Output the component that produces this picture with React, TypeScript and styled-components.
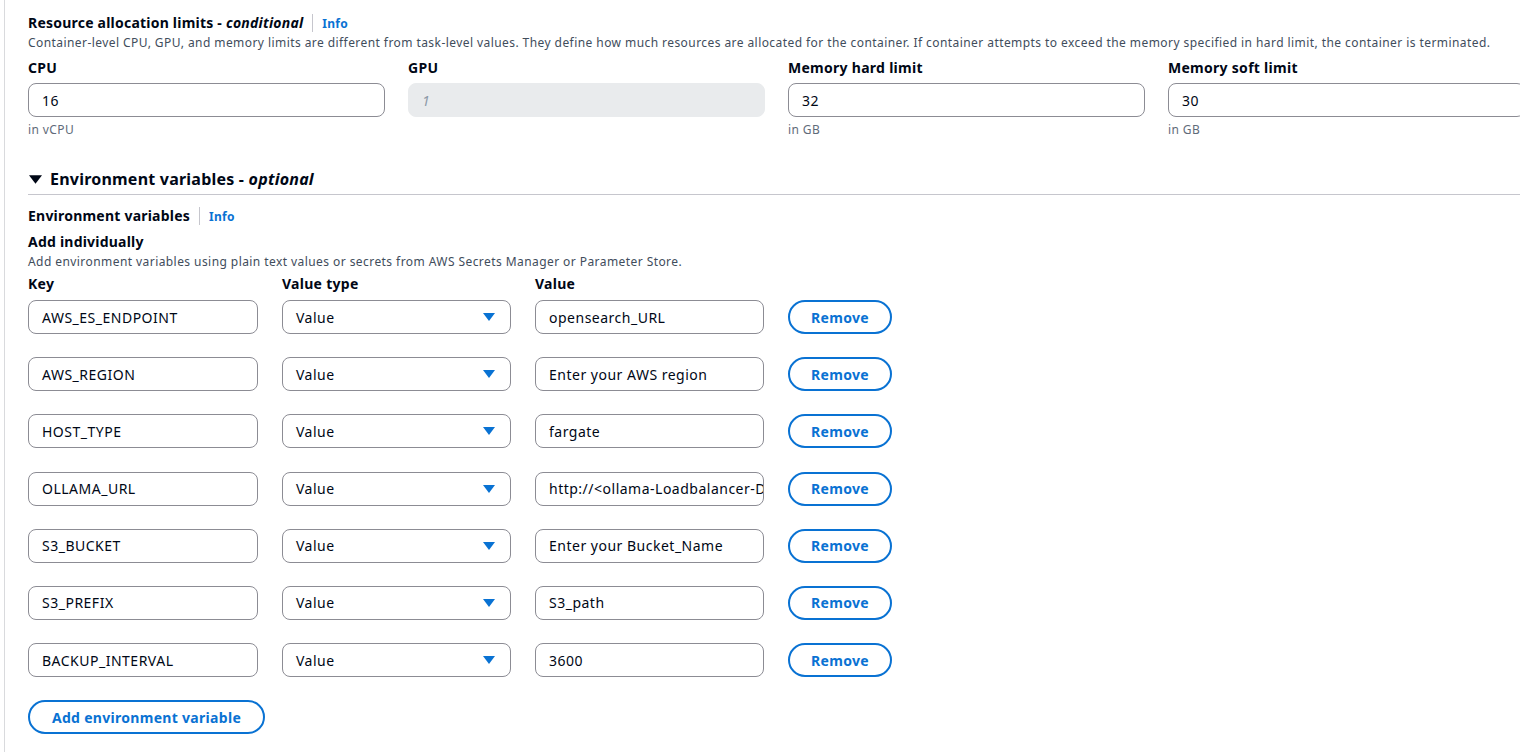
import styled, { createGlobalStyle } from "styled-components";

const GlobalStyle = createGlobalStyle`
  html, body {
    margin: 0;
    padding: 0;
    background: #ffffff;
    overflow: hidden;
  }
  body {
    font-family: "Noto Sans", "Open Sans", Arial, sans-serif;
    color: #000716;
  }
  * {
    box-sizing: border-box;
  }
`;

const envVars = [
  { key: "AWS_ES_ENDPOINT", value: "opensearch_URL" },
  { key: "AWS_REGION", value: "Enter your AWS region" },
  { key: "HOST_TYPE", value: "fargate" },
  { key: "OLLAMA_URL", value: "http://<ollama-Loadbalancer-DNS>" },
  { key: "S3_BUCKET", value: "Enter your Bucket_Name" },
  { key: "S3_PREFIX", value: "S3_path" },
  { key: "BACKUP_INTERVAL", value: "3600" },
];

const limits = [
  { label: "CPU", value: "16", hint: "in vCPU" },
  { label: "GPU", value: "1", disabled: true },
  { label: "Memory hard limit", value: "32", hint: "in GB" },
  { label: "Memory soft limit", value: "30", hint: "in GB" },
];

function CaretDown({ color = "#0972d3", w = 12, h = 8 }) {
  return (
    <svg width={w} height={h} viewBox="0 0 12 8">
      <path d="M0 0 L12 0 L6 8 Z" fill={color} />
    </svg>
  );
}

export default function App() {
  return (
    <>
      <GlobalStyle />
      <Page>
        <TitleRow>
          <Title>
            Resource allocation limits - <em>conditional</em>
          </Title>
          <Divider />
          <InfoLink>Info</InfoLink>
        </TitleRow>
        <Description>
          Container-level CPU, GPU, and memory limits are different from
          task-level values. They define how much resources are allocated for
          the container. If container attempts to exceed the memory specified in
          hard limit, the container is terminated.
        </Description>
        <LimitsGrid>
          {limits.map((item) => (
            <Field key={item.label}>
              <FieldLabel>{item.label}</FieldLabel>
              <TextInput $disabled={item.disabled}>{item.value}</TextInput>
              {item.hint && <Hint>{item.hint}</Hint>}
            </Field>
          ))}
        </LimitsGrid>

        <ExpandHeader>
          <CaretDown color="#000716" w={13} h={9} />
          <ExpandTitle>
            Environment variables - <em>optional</em>
          </ExpandTitle>
        </ExpandHeader>
        <SectionRule />

        <EnvBlock>
          <TitleRow>
            <Title>Environment variables</Title>
            <Divider />
            <InfoLink>Info</InfoLink>
          </TitleRow>
          <SubTitle>Add individually</SubTitle>
          <Description>
            Add environment variables using plain text values or secrets from
            AWS Secrets Manager or Parameter Store.
          </Description>
          <EnvRows>
            <EnvRow>
              <FieldLabel>Key</FieldLabel>
              <FieldLabel>Value type</FieldLabel>
              <FieldLabel>Value</FieldLabel>
            </EnvRow>
            {envVars.map((env) => (
              <EnvRow key={env.key}>
                <TextInput>{env.key}</TextInput>
                <SelectBox>
                  <span>Value</span>
                  <CaretDown />
                </SelectBox>
                <TextInput>{env.value}</TextInput>
                <OutlineButton>Remove</OutlineButton>
              </EnvRow>
            ))}
          </EnvRows>
          <AddButton>Add environment variable</AddButton>
        </EnvBlock>
      </Page>
    </>
  );
}

const Page = styled.div`
  margin-left: 4px;
  min-height: 752px;
  width: 1540px;
  border-left: 1px solid #d9dadd;
  padding: 13px 0 0 23px;
`;

const TitleRow = styled.div`
  display: flex;
  align-items: center;
  height: 20px;
`;

const Title = styled.h2`
  margin: 0;
  font-size: 14px;
  line-height: 20px;
  font-weight: 700;
  letter-spacing: 0.22px;
  em {
    font-style: italic;
  }
`;

const Divider = styled.span`
  width: 1px;
  height: 18px;
  background: #c6c6cd;
  margin: 0 9px;
`;

const InfoLink = styled.a`
  font-size: 12px;
  font-weight: 700;
  letter-spacing: 0.3px;
  color: #0972d3;
  cursor: pointer;
`;

const Description = styled.p`
  margin: 2px 0 0;
  font-size: 12px;
  line-height: 16px;
  letter-spacing: 0.43px;
  color: #414d5c;
  white-space: nowrap;
`;

const LimitsGrid = styled.div`
  display: grid;
  grid-template-columns: repeat(4, 357px);
  column-gap: 23px;
  margin-top: 7px;
`;

const Field = styled.div`
  display: flex;
  flex-direction: column;
`;

const FieldLabel = styled.label`
  font-size: 14px;
  line-height: 20px;
  font-weight: 700;
  letter-spacing: 0.28px;
  color: #000716;
`;

const TextInput = styled.div<{ $disabled?: boolean }>`
  height: 34px;
  display: flex;
  align-items: center;
  padding: 0 13px;
  border: 1px solid ${(p) => (p.$disabled ? "#e9ebed" : "#8c8c94")};
  border-radius: 8px;
  background: ${(p) => (p.$disabled ? "#e9ebed" : "#ffffff")};
  color: ${(p) => (p.$disabled ? "#8d99a8" : "#000716")};
  font-style: ${(p) => (p.$disabled ? "italic" : "normal")};
  font-size: 14px;
  letter-spacing: 0.5px;
  white-space: nowrap;
  overflow: hidden;
  ${FieldLabel} + & {
    margin-top: 5px;
  }
`;

const Hint = styled.span`
  margin-top: 5px;
  font-size: 12px;
  line-height: 16px;
  letter-spacing: 0.4px;
  color: #5f6b7a;
`;

const ExpandHeader = styled.div`
  display: flex;
  align-items: center;
  gap: 8px;
  margin-top: 30px;
  padding-left: 1px;
  height: 22px;
`;

const ExpandTitle = styled.h3`
  margin: 0;
  font-size: 16px;
  line-height: 22px;
  font-weight: 700;
  letter-spacing: 0.22px;
`;

const SectionRule = styled.hr`
  margin: 4px 0 0;
  border: none;
  border-top: 1px solid #c6c6cd;
`;

const EnvBlock = styled.div`
  padding-top: 11px;
`;

const SubTitle = styled.h4`
  margin: 6px 0 0;
  font-size: 14px;
  line-height: 20px;
  font-weight: 700;
  letter-spacing: 0.22px;
`;

const EnvRows = styled.div`
  display: flex;
  flex-direction: column;
  gap: 23.2px;
  margin-top: 4px;
  & > div:first-child {
    margin-bottom: -17.2px;
  }
`;

const EnvRow = styled.div`
  display: grid;
  grid-template-columns: 230px 229px 229px 104px;
  column-gap: 24px;
  align-items: center;
`;

const SelectBox = styled.div`
  height: 34px;
  display: flex;
  align-items: center;
  justify-content: space-between;
  padding: 0 15px 0 13px;
  border: 1px solid #8c8c94;
  border-radius: 8px;
  font-size: 14px;
  letter-spacing: 0.5px;
  color: #000716;
`;

const OutlineButton = styled.button`
  height: 34px;
  border: 2px solid #0972d3;
  border-radius: 20px;
  background: #ffffff;
  color: #0972d3;
  font-family: inherit;
  font-size: 14px;
  font-weight: 700;
  letter-spacing: 0.3px;
  padding: 0 18px;
  cursor: pointer;
`;

const AddButton = styled(OutlineButton)`
  margin-top: 23px;
  width: 237px;
`;
